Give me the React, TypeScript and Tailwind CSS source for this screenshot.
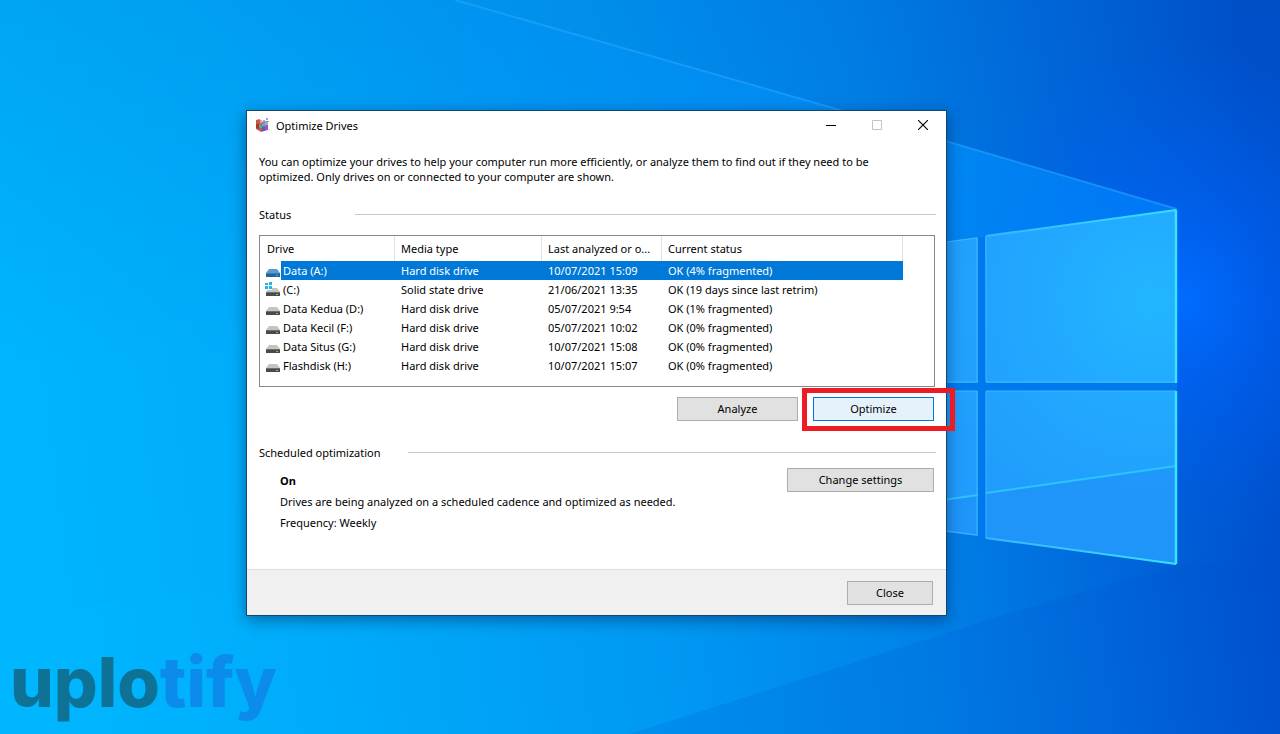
import { useState, type ReactNode } from "react";
import clsx from "clsx";

type Drive = {
  name: string;
  media: string;
  analyzed: string;
  status: string;
  system?: boolean;
};

const drives: Drive[] = [
  { name: "Data (A:)", media: "Hard disk drive", analyzed: "10/07/2021 15:09", status: "OK (4% fragmented)" },
  { name: "(C:)", media: "Solid state drive", analyzed: "21/06/2021 13:35", status: "OK (19 days since last retrim)", system: true },
  { name: "Data Kedua (D:)", media: "Hard disk drive", analyzed: "05/07/2021 9:54", status: "OK (1% fragmented)" },
  { name: "Data Kecil (F:)", media: "Hard disk drive", analyzed: "05/07/2021 10:02", status: "OK (0% fragmented)" },
  { name: "Data Situs (G:)", media: "Hard disk drive", analyzed: "10/07/2021 15:08", status: "OK (0% fragmented)" },
  { name: "Flashdisk (H:)", media: "Hard disk drive", analyzed: "10/07/2021 15:07", status: "OK (0% fragmented)" },
];

function Wallpaper() {
  return (
    <svg
      className="absolute inset-0 h-full w-full"
      viewBox="0 0 1280 734"
      preserveAspectRatio="xMidYMid slice"
      aria-hidden="true"
    >
      <defs>
        <linearGradient id="base" gradientUnits="userSpaceOnUse" x1="0" y1="500" x2="1280" y2="340">
          <stop offset="0" stopColor="#00b6ff" />
          <stop offset="0.25" stopColor="#00aafa" />
          <stop offset="0.5" stopColor="#0098f2" />
          <stop offset="0.7" stopColor="#0082e8" />
          <stop offset="0.88" stopColor="#0062d8" />
          <stop offset="1" stopColor="#004cc8" />
        </linearGradient>
        <linearGradient id="dusk" x1="0" y1="0" x2="0" y2="1">
          <stop offset="0" stopColor="#0060c8" stopOpacity="0.18" />
          <stop offset="0.5" stopColor="#0060c8" stopOpacity="0" />
        </linearGradient>
        <radialGradient id="glow" gradientUnits="userSpaceOnUse" cx="1180" cy="300" r="260">
          <stop offset="0" stopColor="#006cff" stopOpacity="1" />
          <stop offset="0.35" stopColor="#0064fa" stopOpacity="0.6" />
          <stop offset="1" stopColor="#0060f0" stopOpacity="0" />
        </radialGradient>
        <linearGradient id="beam" gradientUnits="userSpaceOnUse" x1="400" y1="0" x2="1177" y2="300">
          <stop offset="0" stopColor="#0098ff" stopOpacity="0.1" />
          <stop offset="0.6" stopColor="#0094ff" stopOpacity="0.9" />
          <stop offset="1" stopColor="#0088ff" stopOpacity="0.8" />
        </linearGradient>
        <radialGradient id="pane" gradientUnits="userSpaceOnUse" cx="1150" cy="300" r="230">
          <stop offset="0" stopColor="#22b6ff" />
          <stop offset="0.5" stopColor="#22a8ff" />
          <stop offset="1" stopColor="#209dfc" />
        </radialGradient>
        <linearGradient id="edge" x1="0" y1="0" x2="1" y2="0">
          <stop offset="0" stopColor="#38b4ff" />
          <stop offset="1" stopColor="#38e0ff" />
        </linearGradient>
      </defs>
      <rect width="1280" height="734" fill="url(#base)" />
      <rect width="1280" height="734" fill="url(#dusk)" />
      <rect width="1280" height="734" fill="url(#glow)" />
      <path d="M455 0 833 108 1177 209V390H500L200 0Z" fill="url(#beam)" opacity="0.7" />
      <path d="M0 612 250 595V734H0Z" fill="#00bcff" opacity="0.12" />
      <path d="M1177 565 1000 616 630 734H1280V565Z" fill="#0050d0" opacity="0.16" />
      <path d="M455 0 833 108 1177 209" fill="none" stroke="#2aa8ff" strokeWidth="2" opacity="0.55" />

      <path d="M940 382H1177V391H940ZM978 237H986V538H978Z" fill="#0078ee" />
      <g fill="url(#pane)">
        <path d="M900 248 978 237V383H900Z" />
        <path d="M985 236 1177 210V383H986Z" />
        <path d="M900 391H978V536L900 526Z" />
        <path d="M986 391H1177V564L986 538Z" />
      </g>
      <path d="M900 506 978 495V536L900 526ZM986 493 1177 466V564L986 538Z" fill="#2090f8" opacity="0.6" />
      <path d="M900 506 978 495M986 493 1176 466" stroke="#2cc4ff" strokeWidth="2" />
      <g fill="none" stroke="#3cb8ff" strokeWidth="1">
        <path d="M900 248 977 238V382H900M900 391H977V535L900 525" />
        <path d="M986 237V382H1176M1176 391H986V538" />
      </g>
      <path d="M986 236 1176 210" stroke="url(#edge)" strokeWidth="2" />
      <path d="M986 538 1176 564" stroke="url(#edge)" strokeWidth="2" />
      <path d="M1176 210V383M1176 391V564" stroke="#38e4ff" strokeWidth="2.5" />
    </svg>
  );
}

function DefragIcon() {
  return (
    <svg className="h-4 w-4 shrink-0" viewBox="0 0 16 16" aria-hidden="true">
      <path d="M1 3 5 2v3l8-1v9l-7 2-5-3Z" fill="#a06888" />
      <path d="M1 3h3v4H1Z" fill="#d8503c" />
      <path d="M1 7h3v5l-3-1Z" fill="#b83028" />
      <path d="M5 3h2v3H5Z" fill="#f0a060" />
      <path d="M4 8h3v3H4Z" fill="#48b868" />
      <path d="M4 11h3v3l-3-1Z" fill="#e0502c" />
      <path d="M7 6h3v3H7Z" fill="#7898f0" />
      <path d="M7 10h3v4H7Z" fill="#4860d0" />
      <path d="M10 5h3v3h-3Z" fill="#70c8c0" />
      <path d="M10 9h3v4h-3Z" fill="#a050c8" />
      <path d="M8 3h2v2H8ZM11 1h2v2h-2Z" fill="#c090e0" />
      <path d="M13 4h1v1h-1ZM14 12h1v1h-1Z" fill="#d8a8e8" />
    </svg>
  );
}

function DriveIcon({ selected, system }: { selected: boolean; system?: boolean }) {
  return (
    <svg className="h-4 w-4 shrink-0" viewBox="0 0 16 16" aria-hidden="true">
      <path d="M4 6h8l3 4H1Z" fill={selected ? "#5c9ccc" : "#c4c4c4"} />
      <path d="M1 10h14v4H1Z" fill={selected ? "#24649c" : "#4a4a4a"} />
      <path d="M1 10h14v1H1Z" fill={selected ? "#3c80b8" : "#707070"} />
      <path d="M11 12h2v1h-2Z" fill={selected ? "#50c8b0" : "#48e048"} />
      {system && (
        <>
          <path d="M0 0h7v8H0Z" fill="#fff" />
          <path d="M0 1h3v2H0ZM4 0h3v3H4ZM0 4h3v3H0ZM4 4h3v3H4Z" fill="#20b4e8" />
        </>
      )}
    </svg>
  );
}

function PushButton({ children, className }: { children: ReactNode; className: string }) {
  return (
    <button type="button" className={clsx("h-6 border text-center leading-4", className)}>
      {children}
    </button>
  );
}

function TitleBar() {
  return (
    <header className="flex h-[28px] items-center">
      <div className="flex flex-1 items-center gap-[5px] pl-2">
        <DefragIcon />
        <h1>Optimize Drives</h1>
      </div>
      <button type="button" aria-label="Minimize" className="flex h-7 w-[46px] items-center justify-center">
        <svg className="h-[10px] w-[10px]" viewBox="0 0 10 10">
          <path d="M0 5.5h10" stroke="#000" />
        </svg>
      </button>
      <button type="button" aria-label="Maximize" disabled className="flex h-7 w-[46px] items-center justify-center">
        <svg className="h-[10px] w-[10px]" viewBox="0 0 10 10">
          <path d="M.5.5h9v9h-9Z" fill="none" stroke="#c4c4c4" />
        </svg>
      </button>
      <button type="button" aria-label="Close window" className="flex h-7 w-[46px] items-center justify-center">
        <svg className="h-[10px] w-[10px]" viewBox="0 0 10 10">
          <path d="m0 0 10 10M10 0 0 10" stroke="#000" strokeWidth="1.1" />
        </svg>
      </button>
    </header>
  );
}

function DriveTable() {
  const [selected, setSelected] = useState("Data (A:)");

  return (
    <div className="h-[152px] border border-[#828790] bg-white">
      <table className="w-[643px] table-fixed border-separate border-spacing-0 text-left">
        <colgroup>
          <col className="w-[135px]" />
          <col className="w-[147px]" />
          <col className="w-[120px]" />
          <col />
        </colgroup>
        <thead>
          <tr className="h-[25px]">
            {["Drive", "Media type", "Last analyzed or o...", "Current status"].map((label) => (
              <th
                key={label}
                scope="col"
                className="overflow-hidden border-r border-[#e0e0e0] py-0 pl-[6px] font-normal whitespace-nowrap first:pl-[7px]"
              >
                {label}
              </th>
            ))}
          </tr>
        </thead>
        <tbody>
          {drives.map((drive) => {
            const active = drive.name === selected;
            const cell = clsx("py-0 pl-[6px] whitespace-nowrap", active && "bg-[#0078d7] text-white");
            return (
              <tr key={drive.name} className="h-[19px]" onClick={() => setSelected(drive.name)}>
                <td className="p-0">
                  <div className="flex h-[19px] items-center pl-[5px]">
                    <DriveIcon selected={active} system={drive.system} />
                    <span
                      className={clsx(
                        "flex-1 pl-[2px] leading-[19px] whitespace-nowrap",
                        active && "bg-[#0078d7] text-white",
                      )}
                    >
                      {drive.name}
                    </span>
                  </div>
                </td>
                <td className={cell}>{drive.media}</td>
                <td className={cell}>{drive.analyzed}</td>
                <td className={cell}>{drive.status}</td>
              </tr>
            );
          })}
        </tbody>
      </table>
    </div>
  );
}

function OptimizeDrivesWindow() {
  return (
    <main className="absolute top-[110px] left-[246px] w-[701px] border border-[#10486c] bg-white text-[11px] leading-[15px] text-black shadow-[0_4px_14px_rgba(0,20,60,0.45)]">
      <TitleBar />

      <div className="pr-[10px] pl-3">
        <p className="max-w-[650px] pt-[15px]">
          You can optimize your drives to help your computer run more efficiently, or analyze them to find out if
          they need to be optimized. Only drives on or connected to your computer are shown.
        </p>

        <section className="pt-[23px]">
          <div className="flex items-center">
            <h2 className="w-24">Status</h2>
            <div className="h-px flex-1 bg-[#c8c8c8]" />
          </div>
          <div className="pt-[13px] pr-px">
            <DriveTable />
          </div>
          <div className="flex justify-end gap-[15px] pt-[10px] pr-[2px]">
            <PushButton className="w-[121px] border-[#adadad] bg-[#e1e1e1]">Analyze</PushButton>
            <div className="relative">
              <PushButton className="w-[121px] border-[#0078d7] bg-[#e5f1fb]">Optimize</PushButton>
              <div className="pointer-events-none absolute -top-[9px] -right-[21px] -bottom-[10px] -left-[11px] border-[5px] border-[#ed1c24]" />
            </div>
          </div>
        </section>

        <section className="pt-6">
          <div className="flex items-center">
            <h2 className="w-[149px]">Scheduled optimization</h2>
            <div className="h-px flex-1 bg-[#c8c8c8]" />
          </div>
          <div className="flex items-start justify-between pt-2 pr-[2px] pl-[21px]">
            <div className="flex flex-col gap-[6px] pt-[5px]">
              <p className="font-bold">On</p>
              <p>Drives are being analyzed on a scheduled cadence and optimized as needed.</p>
              <p>Frequency: Weekly</p>
            </div>
            <PushButton className="w-[147px] border-[#adadad] bg-[#e1e1e1]">Change settings</PushButton>
          </div>
        </section>
      </div>

      <footer className="mt-[39px] flex justify-end border-t border-[#dfdfdf] bg-[#f0f0f0] px-[13px] pt-[11px] pb-[10px]">
        <PushButton className="w-[86px] border-[#adadad] bg-[#e1e1e1]">Close</PushButton>
      </footer>
    </main>
  );
}

export default function App() {
  return (
    <div className="relative min-h-screen overflow-hidden bg-[#0094f0] font-['Noto_Sans',sans-serif]">
      <Wallpaper />
      <OptimizeDrivesWindow />
      <div className="absolute bottom-3 left-[10px] font-[family-name:Inter,sans-serif] text-[69px] leading-[80px] font-extrabold">
        <span className="text-[#0d7295]">uplo</span>
        <span className="text-[#0b8cec]">tify</span>
      </div>
    </div>
  );
}
